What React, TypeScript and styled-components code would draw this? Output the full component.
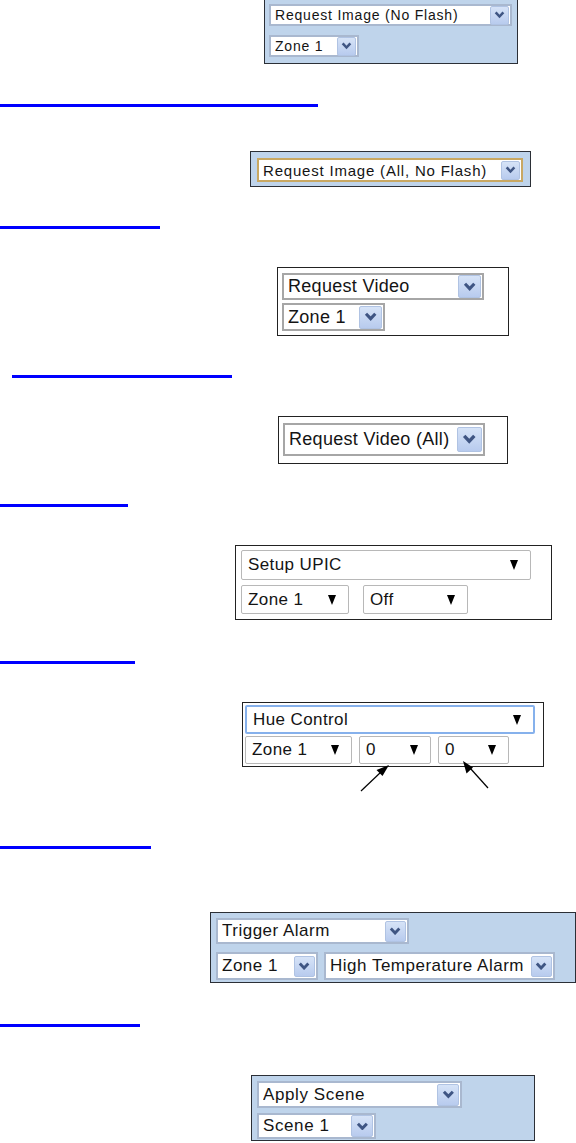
import React from "react";
import styled, { createGlobalStyle } from "styled-components";

const Global = createGlobalStyle`
  html, body { margin: 0; padding: 0; background: #ffffff; }
  body { font-family: "Liberation Sans", Arial, sans-serif; color: #111; }
  #root { width: 576px; min-height: 1143px; overflow: hidden; }
`;

const Page = styled.main`
  display: flex;
  flex-direction: column;
  align-items: flex-start;
  width: 576px;
  height: 1143px;
  overflow: hidden;
`;

const Rule = styled.a<{ $w: number; $gap: number; $indent?: number }>`
  display: block;
  width: ${(p) => p.$w}px;
  height: 3px;
  margin-top: ${(p) => p.$gap}px;
  margin-left: ${(p) => p.$indent ?? 0}px;
  background: #0000ff;
`;

const Panel = styled.section<{
  $tone: "blue" | "white";
  $w: number;
  $h: number;
  $gap: number;
  $indent: number;
  $pad: string;
  $rowGap: number;
}>`
  position: relative;
  box-sizing: border-box;
  flex: none;
  width: ${(p) => p.$w}px;
  height: ${(p) => p.$h}px;
  margin-top: ${(p) => p.$gap}px;
  margin-left: ${(p) => p.$indent}px;
  padding: ${(p) => p.$pad};
  display: flex;
  flex-direction: column;
  align-items: flex-start;
  gap: ${(p) => p.$rowGap}px;
  background: ${(p) => (p.$tone === "blue" ? "#bfd4eb" : "#ffffff")};
  border: 1px solid ${(p) => (p.$tone === "blue" ? "#2b2f36" : "#222")};
`;

const Row = styled.div<{ $gap: number }>`
  display: flex;
  gap: ${(p) => p.$gap}px;
`;

const Field = styled.div<{
  $w: number;
  $h: number;
  $fs: number;
  $ls: number;
  $frame: string;
  $ring?: number;
  $round?: number;
  $padL?: number;
}>`
  box-sizing: border-box;
  flex: none;
  width: ${(p) => p.$w}px;
  height: ${(p) => p.$h}px;
  display: flex;
  align-items: center;
  justify-content: space-between;
  padding-left: ${(p) => p.$padL ?? 4}px;
  background: #ffffff;
  border: ${(p) => p.$ring ?? 1}px solid ${(p) => p.$frame};
  border-radius: ${(p) => p.$round ?? 0}px;
  font-size: ${(p) => p.$fs}px;
  letter-spacing: ${(p) => p.$ls}px;
  color: #141414;
`;

const Label = styled.span`
  white-space: nowrap;
  overflow: hidden;
`;

const ChevronButton = styled.span<{ $size: number }>`
  flex: none;
  box-sizing: border-box;
  width: ${(p) => p.$size}px;
  height: ${(p) => p.$size}px;
  margin-right: 1px;
  display: flex;
  align-items: center;
  justify-content: center;
  background: linear-gradient(#d6e3f7, #b8cbee);
  border: 1px solid #b0c3e3;
  border-radius: 2px;
`;

const Caret = styled.span`
  flex: none;
  width: 0;
  height: 0;
  margin-right: 12px;
  border-left: 4.5px solid transparent;
  border-right: 4.5px solid transparent;
  border-top: 10px solid #000;
`;

const Annotation = styled.svg`
  position: absolute;
  left: 112px;
  top: 54px;
  overflow: visible;
`;

const Chevron = ({ s }: { s: number }) => (
  <svg width={s} height={s * 0.7} viewBox="0 0 10 7">
    <path d="M1.5 1.3 L5 5 L8.5 1.3" stroke="#3f5583" strokeWidth="2.3" fill="none" />
  </svg>
);

type XPProps = {
  text: string;
  w: number;
  h: number;
  fs: number;
  ls: number;
  frame?: string;
  ring?: number;
  btn: number;
};

const XPSelect = ({ text, w, h, fs, ls, frame = "#a9b8cf", ring = 2, btn }: XPProps) => (
  <Field $w={w} $h={h} $fs={fs} $ls={ls} $frame={frame} $ring={ring}>
    <Label>{text}</Label>
    <ChevronButton $size={btn}>
      <Chevron s={btn * 0.58} />
    </ChevronButton>
  </Field>
);

type FlatProps = { text: string; w: number; h: number; frame?: string; ring?: number };

const FlatSelect = ({ text, w, h, frame = "#b8b8b8", ring = 1 }: FlatProps) => (
  <Field $w={w} $h={h} $fs={17} $ls={0.4} $frame={frame} $ring={ring} $round={2} $padL={6}>
    <Label>{text}</Label>
    <Caret />
  </Field>
);

export default function App() {
  return (
    <>
      <Global />
      <Page>
        <Panel $tone="blue" $w={254} $h={67} $gap={-3} $indent={264} $pad="6px 4px" $rowGap={9}>
          <XPSelect text="Request Image (No Flash)" w={243} h={22} fs={14} ls={0.8} btn={19} />
          <XPSelect text="Zone 1" w={90} h={22} fs={14} ls={0.8} btn={19} />
        </Panel>

        <Rule href="#" aria-label="link" $w={318} $gap={40} />

        <Panel $tone="blue" $w={281} $h={36} $gap={44} $indent={250} $pad="6px 6px" $rowGap={0}>
          <XPSelect
            text="Request Image (All, No Flash)"
            w={266}
            h={24}
            fs={15}
            ls={0.8}
            frame="#c9a862"
            ring={2}
            btn={19}
          />
        </Panel>

        <Rule href="#" aria-label="link" $w={160} $gap={39} />

        <Panel $tone="white" $w={232} $h={69} $gap={38} $indent={277} $pad="5px 4px" $rowGap={3}>
          <XPSelect text="Request Video" w={202} h={27} fs={18} ls={0.3} frame="#a6a6a6" ring={2} btn={23} />
          <XPSelect text="Zone 1" w={103} h={28} fs={18} ls={0.3} frame="#a6a6a6" ring={2} btn={23} />
        </Panel>

        <Rule href="#" aria-label="link" $w={220} $gap={39} $indent={12} />

        <Panel $tone="white" $w={230} $h={48} $gap={38} $indent={278} $pad="6px 4px" $rowGap={0}>
          <XPSelect text="Request Video (All)" w={202} h={33} fs={18} ls={0.3} frame="#a6a6a6" ring={2} btn={25} />
        </Panel>

        <Rule href="#" aria-label="link" $w={128} $gap={40} />

        <Panel $tone="white" $w={317} $h={75} $gap={38} $indent={235} $pad="4px 5px" $rowGap={5}>
          <FlatSelect text="Setup UPIC" w={290} h={30} />
          <Row $gap={14}>
            <FlatSelect text="Zone 1" w={108} h={29} />
            <FlatSelect text="Off" w={105} h={29} />
          </Row>
        </Panel>

        <Rule href="#" aria-label="link" $w={135} $gap={41} />

        <Panel $tone="white" $w={302} $h={65} $gap={38} $indent={242} $pad="2px 2px" $rowGap={2}>
          <FlatSelect text="Hue Control" w={290} h={29} frame="#86b1ec" ring={2} />
          <Row $gap={7}>
            <FlatSelect text="Zone 1" w={107} h={28} />
            <FlatSelect text="0" w={72} h={28} />
            <FlatSelect text="0" w={71} h={28} />
          </Row>
          <Annotation width="160" height="40" viewBox="0 0 160 40">
            <line x1="6" y1="34" x2="26" y2="15" stroke="#000" strokeWidth="1.2" />
            <path d="M34 8 L21.5 13 L27.5 19 Z" fill="#000" />
            <line x1="133" y1="31" x2="115" y2="11" stroke="#000" strokeWidth="1.2" />
            <path d="M108 4 L111.5 16.5 L118 10.5 Z" fill="#000" />
          </Annotation>
        </Panel>

        <Rule href="#" aria-label="link" $w={151} $gap={79} />

        <Panel $tone="blue" $w={366} $h={71} $gap={63} $indent={210} $pad="5px 5px" $rowGap={8}>
          <XPSelect text="Trigger Alarm" w={193} h={26} fs={17} ls={0.5} btn={21} />
          <Row $gap={6}>
            <XPSelect text="Zone 1" w={102} h={28} fs={17} ls={0.5} btn={21} />
            <XPSelect text="High Temperature Alarm" w={231} h={28} fs={17} ls={0.5} btn={21} />
          </Row>
        </Panel>

        <Rule href="#" aria-label="link" $w={140} $gap={41} />

        <Panel $tone="blue" $w={284} $h={66} $gap={48} $indent={251} $pad="5px 5px" $rowGap={5}>
          <XPSelect text="Apply Scene" w={205} h={27} fs={17} ls={0.6} btn={22} />
          <XPSelect text="Scene 1" w={119} h={26} fs={17} ls={0.6} btn={22} />
        </Panel>
      </Page>
    </>
  );
}
